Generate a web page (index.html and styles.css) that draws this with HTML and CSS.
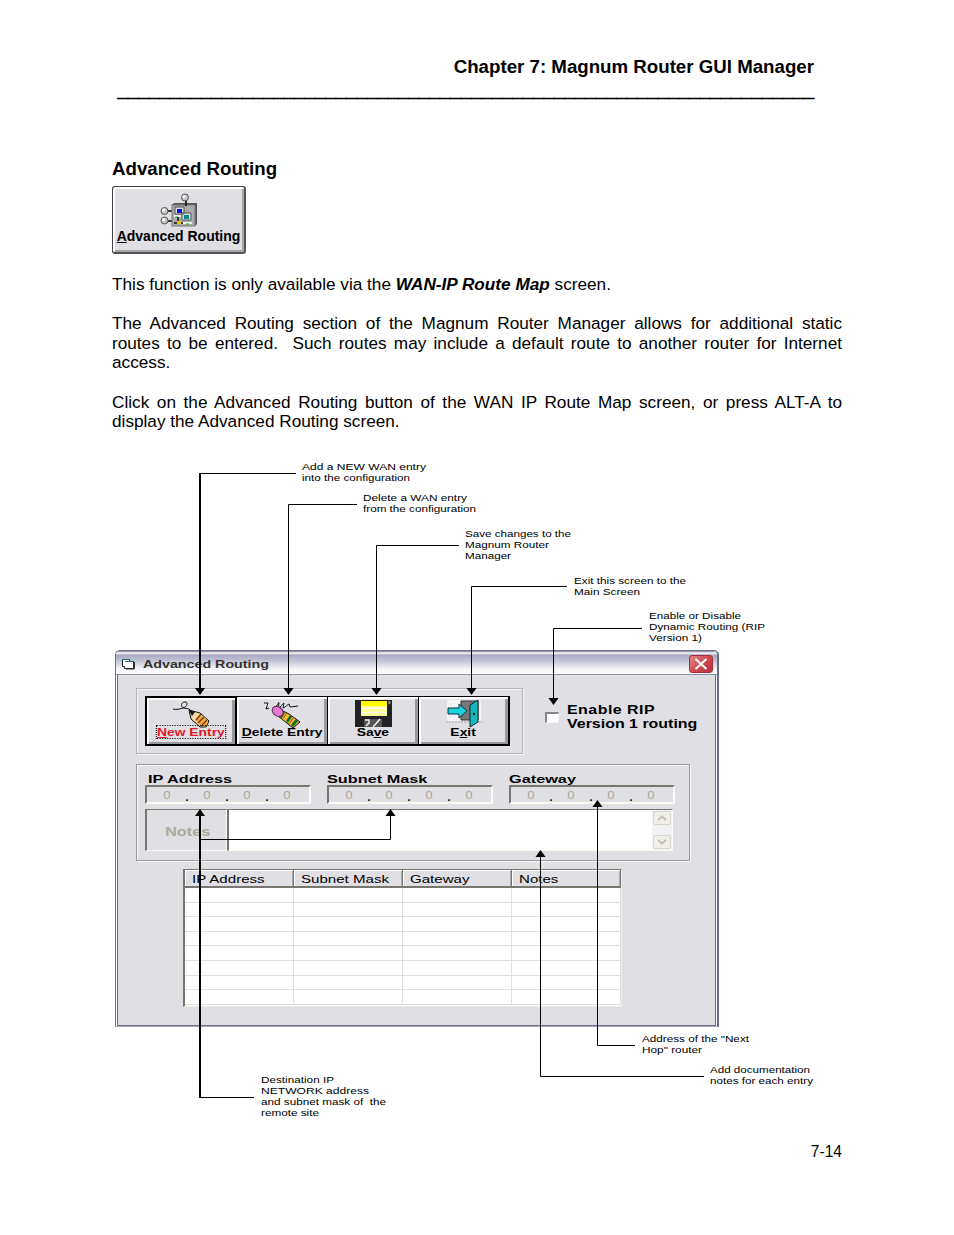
FILE: index.html
```html
<!DOCTYPE html>
<html lang="en">
<head>
    <meta charset="UTF-8">
    <meta name="viewport" content="width=device-width, initial-scale=1.0">
    <title>Chapter 7: Magnum Router GUI Manager</title>
    <link rel="stylesheet" href="styles.css">
</head>
<body>
    <div class="page">
        <header class="chapter">
            <div>Chapter 7: Magnum Router GUI Manager</div>
            <div class="rule">___________________________________________________________________</div>
        </header>

        <h1>Advanced Routing</h1>

        <div class="big-button">
            <svg width="38" height="34" viewBox="0 0 38 34">
                <path d="M5 18h8M5 28h8" stroke="#333" stroke-width="2"/>
                <path d="M12 12l2-2h23v21l-2 2H12z" fill="#555"/>
                <rect x="12" y="12" width="23" height="21" fill="#aaa" stroke="#777"/>
                <g fill="#c8c8c8" stroke="#555">
                    <circle cx="25" cy="4.500" r="3.500"/>
                    <circle cx="4.500" cy="18" r="3.500"/>
                    <circle cx="4.500" cy="27.500" r="3.500"/>
                </g>
                <path d="M26 8v5" stroke="#222" stroke-width="2"/>
                <g fill="#fff">
                    <circle cx="24" cy="3.500" r="1.500"/>
                    <circle cx="3.500" cy="17" r="1.500"/>
                    <circle cx="3.500" cy="26.500" r="1.500"/>
                </g>
                <path d="M15 14h9v7h-9zM22 20h9v7h-9z" fill="#ddd" stroke="#555"/>
                <rect x="17" y="16" width="5" height="4" fill="#0010e0"/>
                <rect x="24" y="22" width="5" height="4" fill="#008c8c"/>
                <path d="M14 23h7M23 30h9" stroke="#eee" stroke-width="2"/>
                <path d="M15 24h3M26 31h3" stroke="#0c0" stroke-width="1"/>
                <path d="M18 24v6h5M14 30h4" stroke="#111" stroke-width="1.500" fill="none"/>
                <rect x="17" y="28" width="4" height="3" fill="#e0c000"/>
            </svg>
            <span><u>A</u>dvanced Routing</span>
        </div>

        <p>This function is only available via the <b><i>WAN-IP Route Map</i></b> screen.</p>
        <p>The Advanced Routing section of the Magnum Router Manager allows for additional static routes to be entered.&nbsp; Such routes may include a default route to another router for Internet access.</p>
        <p>Click on the Advanced Routing button of the WAN IP Route Map screen, or press ALT-A to display the Advanced Routing screen.</p>

        <div class="figure">
            <div class="window">
                <div class="title-bar">
                    <svg width="16" height="12" viewBox="0 0 16 12">
                        <path d="M1.500 1.500h7v2h4v7h-9v-2h-2z" fill="#fff" stroke="#222"/>
                        <path d="M1 1.500h8M4 3.500h9" stroke="#2a6f78"/>
                        <path d="M13.500 4v7H5" fill="none" stroke="#333"/>
                    </svg>
                    <span class="title">Advanced Routing</span>
                    <span class="close">
                        <svg width="14" height="12" viewBox="0 0 14 12">
                            <path d="M1.500 1l11 10M12.500 1l-11 10" stroke="#fff" stroke-width="2"/>
                        </svg>
                    </span>
                </div>

                <div class="window-body">
                    <div class="top-row">
                        <div class="toolbar">
                            <div class="tool focused">
                                <svg width="42" height="28" viewBox="0 0 42 28">
                                    <path d="M3 9c3 1 7 0 10-1c4-1 6-6 2-6c-4 0-5 5-1 6c3 1 5 0 7 3" fill="none" stroke="#111"/>
                                    <path d="M19 10l11 3 9 8-3 6h-6l-9-8z" fill="#f4d9a8" stroke="#111"/>
                                    <path d="M19 10l6 2-3 4z" fill="#111"/>
                                    <path d="M30 14l8 7-2 5h-5l-6-6z" fill="#f0a83c"/>
                                    <path d="M31 14l-5 6M34 17l-6 6M37 20l-6 6" stroke="#7b2a08" stroke-width="1.200"/>
                                </svg>
                                <span><u>N</u>ew Entry</span>
                            </div>
                            <div class="tool">
                                <svg width="42" height="28" viewBox="0 0 42 28">
                                    <path d="M3 3h4l-2 6 3-1M14 8c2-3 3-4 4-6M18 3l-1 6c3-2 4-5 6-6l-1 5c3-1 5-4 6-4l1 3 8-1" fill="none" stroke="#111"/>
                                    <path d="M20 10l8 4 11 8-7 6-15-12z" fill="#f0c030" stroke="#111"/>
                                    <path d="M23 12l-4 6M30 16l-4 6M36 20l-5 6" stroke="#206a28" stroke-width="3"/>
                                    <path d="M26 13l-5 7M33 17l-5 7" stroke="#a44c10" stroke-width="1"/>
                                    <ellipse cx="17" cy="11.500" rx="6" ry="4.500" fill="#e879cf" stroke="#5c205c" transform="rotate(35 17 11)"/>
                                </svg>
                                <span><u>D</u>elete Entry</span>
                            </div>
                            <div class="tool">
                                <svg width="42" height="28" viewBox="0 0 42 28">
                                    <path d="M3 0h37v27H3z" fill="#222"/>
                                    <path d="M9 1h26v15H9z" fill="#ffff9c"/>
                                    <path d="M9 1h26v5H9z" fill="#ff0"/>
                                    <path d="M9 8.500h26M9 12.500h26" stroke="#fff"/>
                                    <path d="M12 19h18v8H12z" fill="#555"/>
                                    <path d="M13 20h4v3l-3 3M28 19l-7 8" fill="none" stroke="#eee" stroke-width="1.500"/>
                                    <path d="M37.500 1v3" stroke="#888" stroke-width="2"/>
                                </svg>
                                <span>Sa<u>v</u>e</span>
                            </div>
                            <div class="tool">
                                <svg width="42" height="28" viewBox="0 0 42 28">
                                    <path d="M4 0h34v21H4z" fill="#f4f4f6"/>
                                    <path d="M3 22h37" stroke="#aaa" stroke-dasharray="2 1"/>
                                    <path d="M18 1h17v19H18z" fill="#777" stroke="#333"/>
                                    <path d="M5 8h11V4l8 7-8 7v-4H5z" fill="#18d4dc" stroke="#134"/>
                                    <path d="M27 5l8-5v22l-8 5z" fill="#12b8bc" stroke="#123"/>
                                    <circle cx="31" cy="14" r="1.200" fill="#111"/>
                                </svg>
                                <span>E<u>x</u>it</span>
                            </div>
                        </div>
                        <div class="rip">
                            <span class="checkbox"></span>
                            <span class="rip-label"><span class="wide">Enable RIP</span><br>Version 1 routing</span>
                        </div>
                    </div>

                    <div class="entry">
                        <div class="fields">
                            <div class="field">
                                <label>IP Address</label>
                                <div class="ip"><span>0</span><b>.</b><span>0</span><b>.</b><span>0</span><b>.</b><span>0</span></div>
                            </div>
                            <div class="field">
                                <label>Subnet Mask</label>
                                <div class="ip"><span>0</span><b>.</b><span>0</span><b>.</b><span>0</span><b>.</b><span>0</span></div>
                            </div>
                            <div class="field">
                                <label>Gateway</label>
                                <div class="ip"><span>0</span><b>.</b><span>0</span><b>.</b><span>0</span><b>.</b><span>0</span></div>
                            </div>
                        </div>
                        <div class="notes">
                            <div class="notes-label"><span>Notes</span></div>
                            <div class="notes-text">
                                <div class="scrollbar">
                                    <span><svg width="10" height="6" viewBox="0 0 10 6"><path d="M1 5l4-3.500L9 5" fill="none" stroke="#c0bfb4" stroke-width="2"/></svg></span>
                                    <span><svg width="10" height="6" viewBox="0 0 10 6"><path d="M1 1l4 3.500L9 1" fill="none" stroke="#c0bfb4" stroke-width="2"/></svg></span>
                                </div>
                            </div>
                        </div>
                    </div>

                    <div class="routes">
                        <div class="head"><span>IP Address</span></div>
                        <div class="head"><span>Subnet Mask</span></div>
                        <div class="head"><span>Gateway</span></div>
                        <div class="head"><span>Notes</span></div>
                        <i></i><i></i><i></i><i></i>
                        <i></i><i></i><i></i><i></i>
                        <i></i><i></i><i></i><i></i>
                        <i></i><i></i><i></i><i></i>
                        <i></i><i></i><i></i><i></i>
                        <i></i><i></i><i></i><i></i>
                        <i></i><i></i><i></i><i></i>
                        <i></i><i></i><i></i><i></i>
                    </div>
                </div>
            </div>

            <!-- Callout lines and captions over the window -->
            <svg class="callouts" width="730" height="670" viewBox="112 455 730 670">
                <g class="lines">
                    <path d="M296 473.500H200"/>
                    <path class="thick" d="M200 473V690"/>
                    <path d="M357 504.500H288.500V690"/>
                    <path d="M459 545.500H376.500V690"/>
                    <path d="M567 586.500H471.500V690"/>
                    <path d="M642 628.500H553.500V700"/>
                    <path d="M635 1045.500H597.500V806"/>
                    <path d="M704 1076.500H540.500V856"/>
                    <path d="M254 1097.500H200"/>
                    <path class="thick" d="M200 1098V815"/>
                    <path d="M200 839.500H390.500V815"/>
                </g>
                <g class="heads">
                    <path d="M195 688h10l-5 7z"/>
                    <path d="M283.500 688h10l-5 7z"/>
                    <path d="M371.500 688h10l-5 7z"/>
                    <path d="M466.500 688h10l-5 7z"/>
                    <path d="M548.500 698h10l-5 7z"/>
                    <path d="M195 816h10l-5-7z"/>
                    <path d="M385.500 816h10l-5-7z"/>
                    <path d="M592.500 807h10l-5-7z"/>
                    <path d="M535.500 857h10l-5-7z"/>
                </g>
                <g class="captions">
                    <text x="302" y="470" textLength="124">Add a NEW WAN entry</text>
                    <text x="302" y="481" textLength="108">into the configuration</text>
                    <text x="363" y="501" textLength="104">Delete a WAN entry</text>
                    <text x="363" y="512" textLength="113">from the configuration</text>
                    <text x="465" y="537" textLength="106">Save changes to the</text>
                    <text x="465" y="548" textLength="84">Magnum Router</text>
                    <text x="465" y="559" textLength="46">Manager</text>
                    <text x="574" y="584" textLength="112">Exit this screen to the</text>
                    <text x="574" y="595" textLength="66">Main Screen</text>
                    <text x="649" y="619" textLength="92">Enable or Disable</text>
                    <text x="649" y="630" textLength="116">Dynamic Routing (RIP</text>
                    <text x="649" y="641" textLength="53">Version 1)</text>
                    <text x="642" y="1042" textLength="107">Address of the "Next</text>
                    <text x="642" y="1053" textLength="60">Hop" router</text>
                    <text x="710" y="1073" textLength="100">Add documentation</text>
                    <text x="710" y="1084" textLength="103">notes for each entry</text>
                    <text x="261" y="1083" textLength="73">Destination IP</text>
                    <text x="261" y="1094" textLength="108">NETWORK address</text>
                    <text x="261" y="1105" textLength="125">and subnet mask of  the</text>
                    <text x="261" y="1116" textLength="58">remote site</text>
                </g>
            </svg>
        </div>

        <footer>7-14</footer>
    </div>

    <script>
        // Stretch the caption glyphs along with their spacing
        document.querySelectorAll('.captions text').forEach(function(text) {
            text.setAttribute('lengthAdjust', 'spacingAndGlyphs');
        });
    </script>
</body>
</html>
```
FILE: styles.css
```css
* {
    box-sizing: border-box;
}
body {
    margin: 0;
    background: #fff;
    color: #000;
    font-family: "Liberation Sans", Arial, sans-serif;
}
.page {
    width: 954px;
    height: 1235px;
    padding: 56px 112px 0;
    overflow: hidden;
}
.chapter {
    padding-right: 28px;
    text-align: right;
    font-size: 18.7px;
    font-weight: bold;
    line-height: 22px;
    white-space: nowrap;
}
.chapter .rule {
    line-height: 25px;
    -webkit-text-stroke: 1px #000;
}
h1 {
    margin: 55px 0 6px;
    font-size: 18.7px;
    line-height: 22px;
}
.big-button {
    display: flex;
    flex-direction: column;
    align-items: center;
    width: 134px;
    height: 68px;
    margin-bottom: 20.5px;
    padding-top: 6px;
    background: #e0dfe4;
    border: 1px solid #444;
    border-right: 2px solid #555;
    border-bottom: 2px solid #555;
    border-radius: 3px;
    box-shadow: inset 2px 2px #fff, inset -2px -2px #a5a5ab;
    font-size: 14px;
    font-weight: bold;
    line-height: 18px;
    white-space: nowrap;
}
.big-button svg {
    flex: none;
}
p {
    margin: 0 0 19.7px;
    font-size: 17.2px;
    line-height: 19.7px;
    text-align: justify;
}

/* Figure */
.figure {
    position: relative;
    height: 670px;
    margin-top: 23px;
    padding: 195px 0 0 3px;
}
.callouts {
    position: absolute;
    top: 0;
    left: 0;
}
.lines path {
    fill: none;
    stroke: #000;
    stroke-width: 1;
}
.lines .thick {
    stroke-width: 2;
}
.captions text {
    font-size: 9.5px;
    white-space: pre;
}

/* Window */
.window {
    width: 604px;
    height: 377px;
    border: 1px solid #6f6f8a;
    border-right: 2px solid #6a6a86;
    border-bottom-color: #a9a9c0;
    border-radius: 5px 5px 0 0;
    background: #fff;
}
.title-bar {
    display: flex;
    align-items: center;
    height: 24px;
    padding: 2px 4px 0 5px;
    border-bottom: 1px solid #8c8ca4;
    border-radius: 4px 4px 0 0;
    background: linear-gradient(#77778f 0, #fff 2px, #a9a9c4 4px, #c4c4d6 10px, #f4f4f8 18px, #fff 23px);
}
.title {
    flex: 1;
    margin-left: 6px;
    font-size: 11.5px;
    font-weight: bold;
    color: #333;
    transform: scaleX(1.24);
    transform-origin: left;
}
.close {
    display: flex;
    align-items: center;
    justify-content: center;
    width: 24px;
    height: 18px;
    border: 1px solid #a03040;
    border-radius: 3px;
    background: linear-gradient(135deg, #e58a88, #cf4a50 50%, #b83040);
}
.window-body {
    height: 351px;
    margin: 0 1px;
    padding: 13px 0 0 18px;
    border: 1px solid #6a6a86;
    border-top: 0;
    background: #e0dfe4;
}
.top-row {
    display: flex;
}
.toolbar {
    display: flex;
    width: 387px;
    height: 66px;
    padding: 7px 0 0 8px;
    border: 1px solid #b4b4bc;
    box-shadow: inset 1px 1px #f4f4f6, 1px 1px #f4f4f6;
}
.tool {
    display: flex;
    flex-direction: column;
    align-items: center;
    width: 91px;
    height: 50px;
    padding-top: 3px;
    border: 1px solid #000;
    border-left: 0;
    border-bottom-width: 2px;
    box-shadow: inset 2px 2px #fff, inset -3px -2px #98989f;
    font-size: 11px;
    font-weight: bold;
    line-height: 12px;
    white-space: nowrap;
}
.tool:last-child {
    border-right-width: 2px;
}
.tool svg {
    flex: none;
}
.tool span {
    margin-top: -2px;
    transform: scaleX(1.26);
}
.tool.focused {
    width: 92px;
    border: 2px solid #000;
    padding-top: 2px;
    color: #e0182d;
}
.focused span {
    outline: 1px dotted #222;
}
.rip {
    display: flex;
    padding: 16px 0 0 22px;
}
.checkbox {
    width: 14px;
    height: 11px;
    margin-top: 8px;
    border: 2px solid #85858c;
    border-right: 1px solid #f4f4f4;
    border-bottom: 1px solid #f4f4f4;
    background: #fff;
}
.rip-label {
    margin-left: 8px;
    font-size: 12px;
    font-weight: bold;
    line-height: 13.5px;
    white-space: nowrap;
    transform: scaleX(1.33);
    transform-origin: left;
}
.rip-label .wide {
    letter-spacing: 0.35px;
}
.entry {
    width: 554px;
    height: 97px;
    margin: 10px 0 8px;
    padding: 8px 0 0 8px;
    border: 1px solid #9a9aa2;
    box-shadow: inset 1px 1px #f8f8f8, 1px 1px #f8f8f8;
}
.fields {
    display: flex;
    gap: 16px;
}
.field {
    width: 166px;
}
.field label {
    display: block;
    height: 12px;
    margin-left: 3px;
    font-size: 11px;
    font-weight: bold;
    line-height: 12px;
    white-space: nowrap;
    transform: scaleX(1.48);
    transform-origin: left;
}
.field + .field label {
    margin-left: 0;
}
.ip {
    display: grid;
    grid-template-columns: repeat(7, 20px);
    height: 19px;
    padding-left: 10px;
    border: 2px solid #77776f;
    border-right-color: #fafaf2;
    border-bottom-color: #fafaf2;
    font-size: 11px;
    line-height: 16px;
    text-align: center;
}
.ip span {
    color: #aaa99a;
    transform: scaleX(1.2);
}
.ip b {
    line-height: 20px;
}
.notes {
    display: flex;
    width: 528px;
    height: 42px;
    margin-top: 5px;
}
.notes-label,
.notes-text {
    border: 1px solid #77776f;
    border-left-width: 2px;
    border-right-color: #fafaf2;
    border-bottom-color: #fafaf2;
}
.notes-label {
    display: flex;
    align-items: center;
    justify-content: center;
    width: 82px;
    padding: 4px 0 0 2px;
    font-size: 12px;
    font-weight: bold;
    color: #aaa99a;
}
.notes-label span {
    transform: scaleX(1.35);
}
.notes-text {
    display: flex;
    justify-content: flex-end;
    flex: 1;
    background: #fff;
}
.scrollbar {
    display: flex;
    flex-direction: column;
    justify-content: space-between;
    width: 20px;
    padding: 1px;
    background: #f2f2f6;
}
.scrollbar span {
    display: flex;
    align-items: center;
    justify-content: center;
    height: 14px;
    border: 1px solid #d8d7ca;
    border-radius: 2px;
    background: #efeee8;
}
.routes {
    display: grid;
    grid-template-columns: 109px 109px 109px 109px;
    grid-template-rows: 18px repeat(8, 14.6px);
    width: 439px;
    height: 138px;
    margin-left: 47px;
    border: 1px solid #77776f;
    border-left-width: 2px;
    border-right-color: #f2efdf;
    border-bottom-color: #f2efdf;
    background: #fff;
}
.head {
    padding-left: 7px;
    border-right: 1px solid #77776f;
    border-bottom: 2px solid #77776f;
    box-shadow: inset 1px 1px #fff, inset -1px 0 #aaaab0;
    background: #e0dfe4;
    font-size: 11px;
    line-height: 18px;
    white-space: nowrap;
}
.head span {
    display: inline-block;
    transform: scaleX(1.37);
    transform-origin: left;
}
.routes i {
    border-right: 1px solid #dedee3;
    border-bottom: 1px solid #dedee3;
}
footer {
    margin-top: 17px;
    font-size: 15.6px;
    line-height: 20px;
    text-align: right;
}
```
